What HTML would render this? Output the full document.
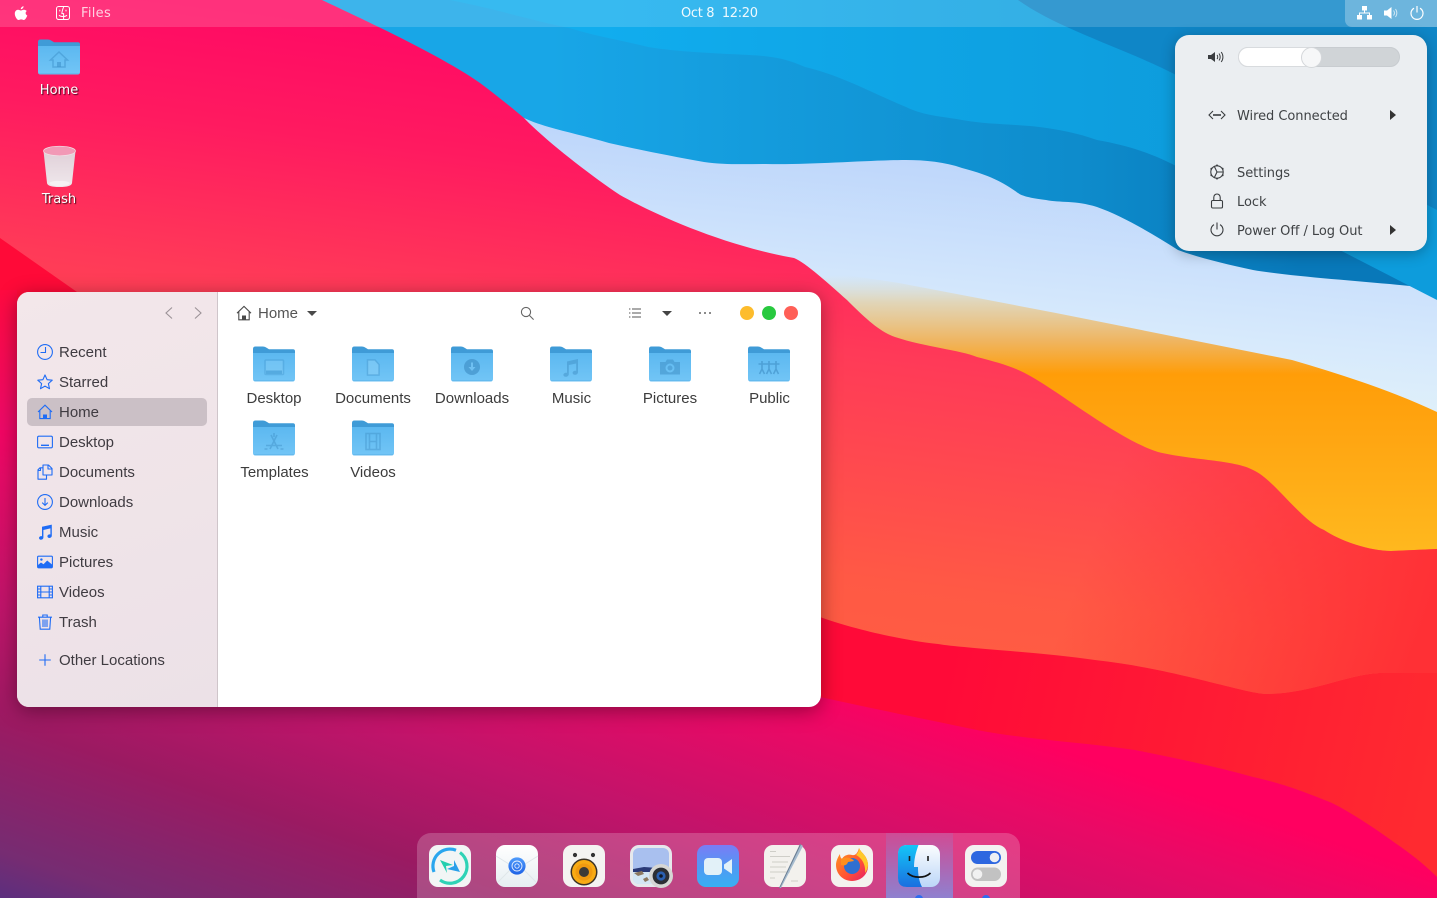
<!DOCTYPE html>
<html><head><meta charset="utf-8"><title>Files</title>
<style>
html,body{margin:0;padding:0;width:1437px;height:898px;overflow:hidden;background:#ff0a62}
*{box-sizing:border-box}
svg{display:block}
#root{position:relative;width:1437px;height:898px;overflow:hidden}
.a{position:absolute}
#bg{position:absolute;left:0;top:0}
.panel{position:absolute;left:0;top:0;width:1437px;height:27px;background:rgba(255,255,255,.16);font:13px "DejaVu Sans","Liberation Sans",sans-serif;color:#fff}
.t{position:absolute;white-space:pre;line-height:18px}
.dl{position:absolute;font:13px/18px "DejaVu Sans",sans-serif;color:#fff;text-shadow:1px 1px 1px rgba(0,0,0,.75);white-space:pre;transform:translateX(-50%)}
.win{position:absolute;left:17px;top:292px;width:804px;height:415px;border-radius:12px;background:#fff;box-shadow:0 4px 20px rgba(0,0,0,.38);overflow:hidden}
.side{position:absolute;left:0;top:0;width:201px;height:415px;background:linear-gradient(160deg,#f3e7ea,#ece1e7);border-right:1px solid #cfc5ca}
.sel{position:absolute;left:10px;top:106px;width:180px;height:28px;border-radius:5px;background:#cbc0c6}
.si{position:absolute;left:20px;width:16px;height:16px}
.st{position:absolute;left:42px;font:15px/20px "Liberation Sans",sans-serif;letter-spacing:0;color:#3f3b41;white-space:pre}
.fl{position:absolute;font:15px/20px "Liberation Sans",sans-serif;letter-spacing:0;color:#3c3c3c;white-space:pre;transform:translateX(-50%)}
.f{position:absolute;width:42px;height:36px}
.pop{position:absolute;left:1175px;top:35px;width:252px;height:216px;border-radius:14px;background:#ebeef1;box-shadow:0 3px 14px rgba(0,0,0,.28)}
.pt{position:absolute;left:62px;font:13px/18px "DejaVu Sans",sans-serif;letter-spacing:-.05px;color:#3f4245;white-space:pre}
.tri{position:absolute;width:0;height:0;border-top:5px solid transparent;border-bottom:5px solid transparent;border-left:6px solid #333}
.dock{position:absolute;left:417px;top:833px;width:603px;height:65px;border-radius:14px 14px 0 0;background:rgba(255,255,255,.2);overflow:hidden}
.d{position:absolute;top:845px;width:42px;height:42px;overflow:visible}
</style></head><body><div id="root">

<svg id="bg" width="1437" height="898" viewBox="0 0 1437 898">
<defs>
<linearGradient id="gBase" gradientUnits="userSpaceOnUse" x1="0" y1="898" x2="153" y2="443">
<stop offset="0" stop-color="#5c2f7e"/><stop offset=".09" stop-color="#762c72"/><stop offset=".35" stop-color="#9b1a62"/><stop offset=".58" stop-color="#c0146a"/><stop offset=".85" stop-color="#e80a66"/><stop offset="1" stop-color="#ff0060"/>
</linearGradient>
<linearGradient id="gRed" gradientUnits="userSpaceOnUse" x1="950" y1="650" x2="1437" y2="760">
<stop offset="0" stop-color="#ff0a38"/><stop offset="1" stop-color="#ff2a30"/>
</linearGradient>
<linearGradient id="gSky" gradientUnits="userSpaceOnUse" x1="1150" y1="170" x2="1130" y2="390">
<stop offset="0" stop-color="#bcd5fb"/><stop offset=".7" stop-color="#d6e9fc"/><stop offset="1" stop-color="#dff0fa"/>
</linearGradient>
<linearGradient id="gOr" gradientUnits="userSpaceOnUse" x1="0" y1="275" x2="0" y2="550">
<stop offset="0" stop-color="#dcdcc8" stop-opacity="0"/><stop offset=".1" stop-color="#e2d3b0" stop-opacity=".9"/><stop offset=".24" stop-color="#efb560"/><stop offset=".36" stop-color="#ff9d08"/><stop offset=".6" stop-color="#ffa612"/><stop offset="1" stop-color="#ffb81e"/>
</linearGradient>
<linearGradient id="gPink" gradientUnits="userSpaceOnUse" x1="400" y1="30" x2="330" y2="600">
<stop offset="0" stop-color="#ff0a64"/><stop offset=".2" stop-color="#ff1a60"/><stop offset=".46" stop-color="#ff3a58"/><stop offset=".85" stop-color="#ff5945"/><stop offset="1" stop-color="#ff5d42"/>
</linearGradient>
<linearGradient id="gPink2" gradientUnits="userSpaceOnUse" x1="1100" y1="520" x2="1420" y2="640">
<stop offset="0" stop-color="#ff3035" stop-opacity="0"/><stop offset="1" stop-color="#ff3035"/>
</linearGradient>
<linearGradient id="gB1" gradientUnits="userSpaceOnUse" x1="550" y1="0" x2="1300" y2="0">
<stop offset="0" stop-color="#18a6e7"/><stop offset=".7" stop-color="#0e8ccc"/><stop offset="1" stop-color="#0878b9"/>
</linearGradient>
<linearGradient id="gB2" gradientUnits="userSpaceOnUse" x1="600" y1="0" x2="1200" y2="0">
<stop offset="0" stop-color="#11adee"/><stop offset="1" stop-color="#0d9cdc"/>
</linearGradient>
<linearGradient id="gLeft" gradientUnits="userSpaceOnUse" x1="0" y1="290" x2="0" y2="430">
<stop offset="0" stop-color="#ff0a40"/><stop offset="1" stop-color="#ee0a69"/>
</linearGradient>
</defs>
<rect width="1437" height="898" fill="url(#gBase)"/>
<path fill="url(#gRed)" d="M0,200 L1437,500 L1437,877 C1420,860 1405,850 1391,840 C1370,825 1350,812 1332,803 C1300,790 1280,783 1253,777 C1210,765 1170,757 1135,750 C1080,742 1030,740 977,730 C920,718 870,708 820,697 L17,345 L0,335 Z"/>
<rect x="0" y="290" width="17" height="140" fill="url(#gLeft)"/>
<path fill="url(#gSky)" d="M400,50 H1437 V430 H820 Z"/>
<path fill="url(#gOr)" d="M820,269 L859,277 L899,283 L1056,313 L1292,360 C1340,374 1390,390 1437,412 L1437,580 L820,580 Z"/>
<path fill="url(#gB1)" d="M300,0 L1437,0 L1437,289 C1380,282 1300,278 1253,270 C1225,264 1200,258 1178,250 C1150,232 1120,215 1097,207 C1075,200 1060,203 1046,200 C1030,198 1022,196 1018,193 C1000,180 985,174 962,168 C945,162 925,160 906,160 C870,160 810,165 766,164 C745,164 725,165 704,162 C670,156 640,150 609,143 C575,133 545,128 524,118 Z"/>
<path fill="url(#gB2)" d="M450,0 L1437,0 L1437,300 L1180,168 C1150,152 1125,145 1097,140 C1075,132 1050,128 1030,126 C1005,124 985,124 962,120 C940,116 925,116 906,107 C870,92 840,75 805,67 C785,58 770,56 749,55 C710,53 680,52 648,47 C620,40 595,36 569,28 C530,20 500,10 450,0 Z"/>
<path fill="#0f86c7" d="M1018,0 C1060,30 1130,50 1180,77 L1437,210 L1437,0 Z"/>
<path fill="url(#gPink)" d="M0,0 L322,0 C360,18 440,55 480,83 C500,98 512,108 524,118 C545,140 590,175 620,195 C650,212 720,245 794,258 C805,262 830,285 847,300 C865,318 880,332 895,337 C925,347 960,350 977,357 C1000,363 1015,367 1032,377 C1065,396 1120,440 1158,452 C1190,460 1235,460 1253,470 C1275,480 1300,520 1324,530 C1340,541 1370,551 1391,551 L1437,549 L1437,673 L1379,673 C1345,675 1310,694 1265,694 C1240,692 1170,668 1095,660 C1040,652 960,648 938,644 C900,640 850,628 820,617 L77,292 L0,238 Z"/>
<path fill="url(#gPink2)" d="M1032,377 C1065,396 1120,440 1158,452 C1190,460 1235,460 1253,470 C1275,480 1300,520 1324,530 C1340,541 1370,551 1391,551 L1437,549 L1437,673 L1379,673 C1345,675 1310,694 1265,694 C1240,692 1170,668 1095,660 L1000,650 Z"/>
</svg>

<svg width="0" height="0" style="position:absolute">
<defs>
<linearGradient id="fFront" x1="0" y1="0" x2="0" y2="1"><stop offset="0" stop-color="#5cb8f0"/><stop offset="1" stop-color="#72c5f6"/></linearGradient>
<symbol id="folder" viewBox="0 0 42 36">
<path d="M0,3 Q0,0.5 2.5,0.5 H10 Q12,0.5 14,2 L16,3.2 H40 Q42,3.2 42,5.2 V12 H0 Z" fill="#3f9bd7"/>
<path d="M0,7 H42 V33 Q42,35.5 39.5,35.5 H2.5 Q0,35.5 0,33 Z" fill="url(#fFront)"/>
<rect x="1" y="34.2" width="40" height="1.1" rx=".5" fill="#4ba6e0" opacity=".45"/>
</symbol>
</defs>
</svg>

<div class="panel">
<svg class="a" style="left:14px;top:6px" width="14" height="15" viewBox="0 0 14 15"><path fill="#fff" d="M9.6 0.3C9.7 1.6 8.4 3.3 6.8 3.2 6.7 1.8 8.1 0.4 9.6 0.3ZM12.8 5C11.1 6 11.3 8.6 13.3 9.5 12.6 11.5 11.2 14 9.7 14 8.7 14 8.4 13.4 7.2 13.4 6 13.4 5.6 14 4.7 14 3 14 0.8 10.4 0.8 7.7 0.8 5.2 2.4 3.8 4 3.8 5.2 3.8 6 4.5 6.9 4.5 7.8 4.5 8.5 3.7 9.9 3.7 11 3.7 12 4.1 12.8 5Z"/></svg>
<svg class="a" style="left:56px;top:6px" width="14" height="14" viewBox="0 0 14 14" fill="none" stroke="#fff" stroke-width="1"><rect x=".5" y=".5" width="13" height="13" rx="2.2"/><path d="M7.6 1C6.6 3.5 5.9 5.5 5.9 7.6H7.6V13"/><path d="M3 9.2C5 11 9 11 11 9.2" /><path d="M3.8 3.8V5.4M10 3.8V5.4"/></svg>
<div class="t" style="left:81px;top:5px;letter-spacing:.3px;color:rgba(255,255,255,.78)">Files</div>
<div class="t" style="left:681px;top:5px;letter-spacing:-.33px;color:rgba(255,255,255,.92)">Oct 8  12:20</div>
<div class="a" style="left:1345px;top:0;width:92px;height:27px;border-radius:0 0 0 7px;background:rgba(255,255,255,.28)"></div>
<svg class="a" style="left:1357px;top:6px" width="15" height="14" viewBox="0 0 15 14" fill="#fff"><rect x="5" y="0" width="5" height="4.5"/><rect x="0" y="9" width="5" height="4.5"/><rect x="10" y="9" width="5" height="4.5"/><path d="M7 4.5H8V6.5H13V9H12V7.5H3V9H2V6.5H7Z"/></svg>
<svg class="a" style="left:1384px;top:6px" width="15" height="14" viewBox="0 0 15 14"><path fill="#fff" d="M0 4.5H3L7.5 1V13L3 9.5H0Z"/><path fill="none" stroke="#fff" stroke-opacity=".7" d="M9.5 4.5C10.7 6 10.7 8 9.5 9.5M11.5 3C13.2 5.5 13.2 8.5 11.5 11"/></svg>
<svg class="a" style="left:1410px;top:5px" width="14" height="15" viewBox="0 0 14 15" fill="none" stroke="#fff" stroke-width="1.2"><path d="M4 3.2A6 6 0 1 0 10 3.2"/><path d="M7 1V7.5"/></svg>
</div>

<svg class="f" style="left:38px;top:39px" viewBox="0 0 42 36"><use href="#folder" width="42" height="36"/><path d="M21 13L12.5 21H15V28H27V21H29.5Z" fill="none" stroke="#3f93cc" stroke-width="1.5" opacity=".55"/><rect x="19" y="23" width="4" height="5" fill="#3f93cc" opacity=".6"/></svg>
<div class="dl" style="left:59px;top:82px">Home</div>
<svg class="a" style="left:42px;top:145px" width="35" height="43" viewBox="0 0 35 43"><defs><linearGradient id="tb" x1="0" y1="0" x2="0" y2="1"><stop offset="0" stop-color="#e0d0d8"/><stop offset="1" stop-color="#efe8ec"/></linearGradient></defs><path d="M1.5 6L5 38Q5.5 42 17.5 42Q29.5 42 30 38L33.5 6Z" fill="url(#tb)"/><ellipse cx="17.5" cy="6" rx="16" ry="4.8" fill="#f299b6"/><ellipse cx="17.5" cy="6" rx="16" ry="4.8" fill="none" stroke="#f0e0e6" stroke-width=".7"/><path d="M7 38Q11 35.5 17.5 36Q24 35.5 28 38Q26 41 17.5 41Q9 41 7 38Z" fill="#f5f1f3"/></svg>
<div class="dl" style="left:59px;top:191px">Trash</div>

<div class="win">
<div class="side">
<svg class="a" style="left:147px;top:14px" width="10" height="14" viewBox="0 0 10 14" fill="none" stroke="#9b9297" stroke-width="1.1"><path d="M8 1.5L2 7L8 12.5"/></svg>
<svg class="a" style="left:176px;top:14px" width="10" height="14" viewBox="0 0 10 14" fill="none" stroke="#9b9297" stroke-width="1.1"><path d="M2 1.5L8 7L2 12.5"/></svg>
<div class="sel"></div>

<svg class="si" style="top:52px" viewBox="0 0 16 16" fill="none" stroke="#1f6cf5" stroke-width="1.1"><circle cx="8" cy="8" r="7.4"/><path d="M8.5 3V8.5H3.5"/></svg>
<div class="st" style="top:51px">Recent</div>
<svg class="si" style="top:82px" viewBox="0 0 16 16" fill="none" stroke="#1f6cf5" stroke-width="1.1" stroke-linejoin="round"><path d="M8 1L10.1 5.7L15.2 6.2L11.4 9.6L12.5 14.7L8 12.1L3.5 14.7L4.6 9.6L0.8 6.2L5.9 5.7Z"/></svg>
<div class="st" style="top:81px">Starred</div>
<svg class="si" style="top:112px" viewBox="0 0 16 16" fill="none" stroke="#1f6cf5" stroke-width="1.1"><path d="M1 8L8 1.2L15 8M2.8 6.6V14.6H13.2V6.6"/><path d="M6 15V10.5H10V15Z" fill="#1f6cf5" stroke="none"/></svg>
<div class="st" style="top:111px">Home</div>
<svg class="si" style="top:142px" viewBox="0 0 16 16" fill="none" stroke="#1f6cf5" stroke-width="1.1"><rect x=".6" y="2.2" width="14.8" height="11.6" rx="1.3"/><rect x="4" y="10.6" width="8" height="1.4" fill="#1f6cf5" stroke="none"/></svg>
<div class="st" style="top:141px">Desktop</div>
<svg class="si" style="top:172px" viewBox="0 0 16 16" fill="none" stroke="#1f6cf5" stroke-width="1.1" stroke-linejoin="round"><path d="M6.5 3.8H3L1 5.8V15.2H9.5V11"/><path d="M6 1H11.5L15 4.5V11H6Z"/><path d="M11 1V5H15"/><path d="M1 6.5H3.5V4"/></svg>
<div class="st" style="top:171px">Documents</div>
<svg class="si" style="top:202px" viewBox="0 0 16 16" fill="none" stroke="#1f6cf5" stroke-width="1.1"><circle cx="8" cy="8" r="7.4"/><path d="M8 4V11.2M5.2 8.6L8 11.4L10.8 8.6"/></svg>
<div class="st" style="top:201px">Downloads</div>
<svg class="si" style="top:232px" viewBox="0 0 16 16" fill="#1f6cf5"><path d="M5 2.8L14.8.6V11.8C14.8 13.2 13.6 14 12.5 14 11.3 14 10.4 13.3 10.4 12.3 10.4 11.2 11.6 10.4 12.7 10.4 13 10.4 13.2 10.4 13.4 10.5V4.4L6.4 6V13.5C6.4 14.9 5.2 15.7 4 15.7 2.9 15.7 2 15 2 14 2 12.9 3.2 12.1 4.3 12.1 4.5 12.1 4.8 12.1 5 12.2Z"/></svg>
<div class="st" style="top:231px">Music</div>
<svg class="si" style="top:262px" viewBox="0 0 16 16"><rect x=".6" y="2.2" width="14.8" height="11.6" rx="1" fill="none" stroke="#1f6cf5" stroke-width="1.1"/><circle cx="4.4" cy="5.6" r="1.2" fill="#1f6cf5"/><path d="M1 13.5V11L4 8.5L6.5 10.2L10.2 6.5L15 10.5V13.5Z" fill="#1f6cf5"/></svg>
<div class="st" style="top:261px">Pictures</div>
<svg class="si" style="top:292px" viewBox="0 0 16 16" fill="none" stroke="#1f6cf5" stroke-width="1.1"><rect x=".6" y="2.2" width="14.8" height="11.6"/><path d="M3.8 2.2V13.8M12.2 2.2V13.8M3.8 8H12.2M.6 5H3.8M.6 8H3.8M.6 11H3.8M12.2 5H15.4M12.2 8H15.4M12.2 11H15.4"/></svg>
<div class="st" style="top:291px">Videos</div>
<svg class="si" style="top:322px" viewBox="0 0 16 16" fill="none" stroke="#1f6cf5" stroke-width="1.1"><path d="M1 3.2H15M5.8 3V1H10.2V3M2.4 3.4L3.2 15.2H12.8L13.6 3.4"/><path d="M6 5.5V13M8 5.5V13M10 5.5V13"/></svg>
<div class="st" style="top:321px">Trash</div>
<svg class="si" style="top:360px" viewBox="0 0 16 16" fill="none" stroke="#1f6cf5" stroke-width="1.1"><path d="M8 2.2V13.8M2.2 8H13.8"/></svg>
<div class="st" style="top:359px">Other Locations</div>
</div>

<svg class="a" style="left:219px;top:13px" width="16" height="16" viewBox="0 0 16 16" fill="none" stroke="#4a4a4a" stroke-width="1.1"><path d="M1 8.2L8 1.4L15 8.2M2.8 6.8V14.8H13.2V6.8"/><path d="M6 15V10.5H10V15Z" fill="#4a4a4a" stroke="none"/></svg>
<div class="a" style="left:241px;top:12px;font:15px/20px 'Liberation Sans',sans-serif;color:#555">Home</div>
<div class="a" style="left:290px;top:19px;width:0;height:0;border-left:5px solid transparent;border-right:5px solid transparent;border-top:5px solid #4a4a4a"></div>
<svg class="a" style="left:503px;top:14px" width="15" height="15" viewBox="0 0 15 15" fill="none" stroke="#666" stroke-width="1.1"><circle cx="6" cy="6" r="4.6"/><path d="M9.4 9.4L13.6 13.6"/></svg>
<svg class="a" style="left:612px;top:16px" width="12" height="10" viewBox="0 0 12 10" fill="none" stroke="#555" stroke-width="1"><path d="M3 1H12M3 5H12M3 9H12M0 1H1.4M0 5H1.4M0 9H1.4"/></svg>
<div class="a" style="left:645px;top:19px;width:0;height:0;border-left:5px solid transparent;border-right:5px solid transparent;border-top:5px solid #444"></div>
<svg class="a" style="left:681px;top:19px" width="14" height="4" viewBox="0 0 14 4" fill="#666"><circle cx="2" cy="2" r="1"/><circle cx="7" cy="2" r="1"/><circle cx="12" cy="2" r="1"/></svg>
<div class="a" style="left:723px;top:14px;width:14px;height:14px;border-radius:50%;background:#fdbc2c"></div>
<div class="a" style="left:745px;top:14px;width:14px;height:14px;border-radius:50%;background:#28c93f"></div>
<div class="a" style="left:767px;top:14px;width:14px;height:14px;border-radius:50%;background:#ff5f57"></div>
</div>

<!-- file grid -->
<svg class="f" style="left:253px;top:346px" viewBox="0 0 42 36"><use href="#folder" width="42" height="36"/><g opacity=".35"><rect x="12" y="14" width="18.5" height="14.5" rx="1" fill="#8ed2f8" stroke="#3f93cc" stroke-width="1.6"/><rect x="13" y="24.5" width="16" height="3.5" fill="#2f83bc"/></g></svg>
<div class="fl" style="left:274px;top:389px">Desktop</div>
<svg class="f" style="left:352px;top:346px" viewBox="0 0 42 36"><use href="#folder" width="42" height="36"/><path d="M15.5 14H23L27 18.5V29H15.5Z" fill="#8ed2f8" fill-opacity=".5" stroke="#3f93cc" stroke-width="1.5" stroke-opacity=".45"/></svg>
<div class="fl" style="left:373px;top:389px">Documents</div>
<svg class="f" style="left:451px;top:346px" viewBox="0 0 42 36"><use href="#folder" width="42" height="36"/><circle cx="21" cy="21" r="8" fill="#3f8fc6" opacity=".65"/><path d="M20 16.5H22V21H24.5L21 25L17.5 21H20Z" fill="#6fc0f2"/></svg>
<div class="fl" style="left:472px;top:389px">Downloads</div>
<svg class="f" style="left:550px;top:346px" viewBox="0 0 42 36"><use href="#folder" width="42" height="36"/><path d="M17 15.5L28 13V26C28 27.8 26.5 28.8 25 28.8 23.6 28.8 22.6 28 22.6 26.9 22.6 25.6 24 24.7 25.3 24.7 25.7 24.7 26 24.8 26.2 24.9V17.5L18.8 19V28C18.8 29.8 17.3 30.8 15.8 30.8 14.4 30.8 13.4 30 13.4 28.9 13.4 27.6 14.8 26.7 16.1 26.7 16.5 26.7 16.8 26.8 17 26.9Z" fill="#3f8fc6" opacity=".5"/></svg>
<div class="fl" style="left:571.5px;top:389px">Music</div>
<svg class="f" style="left:649px;top:346px" viewBox="0 0 42 36"><use href="#folder" width="42" height="36"/><path d="M11 16H16.5L18 13.5H24L25.5 16H31V28.5H11Z M21 17.5A4.5 4.5 0 1 0 21 26.5A4.5 4.5 0 1 0 21 17.5Z M21 19.5A2.5 2.5 0 1 1 21 24.5A2.5 2.5 0 1 1 21 19.5Z" fill="#3f8fc6" opacity=".55" fill-rule="evenodd"/></svg>
<div class="fl" style="left:670px;top:389px">Pictures</div>
<svg class="f" style="left:748px;top:346px" viewBox="0 0 42 36"><use href="#folder" width="42" height="36"/><g fill="none" stroke="#3f8fc6" stroke-width="1.6" opacity=".6"><path d="M14 15V23M14 23L11.5 28M14 23L16.5 28M10.5 18L17.5 18"/><path d="M21 15V23M21 23L18.5 28M21 23L23.5 28M17.5 18L24.5 18"/><path d="M28 15V23M28 23L25.5 28M28 23L30.5 28M24.5 18L31.5 18"/></g></svg>
<div class="fl" style="left:769.5px;top:389px">Public</div>
<svg class="f" style="left:253px;top:420px" viewBox="0 0 42 36"><use href="#folder" width="42" height="36"/><path d="M21 13V17M17 29L24 15M25 29L18 15M13 25.5H29M11.5 29H14.5M27.5 29H30.5" fill="none" stroke="#3f8fc6" stroke-width="1.6" opacity=".45"/></svg>
<div class="fl" style="left:274.5px;top:463px">Templates</div>
<svg class="f" style="left:352px;top:420px" viewBox="0 0 42 36"><use href="#folder" width="42" height="36"/><g fill="none" stroke="#3f8fc6" stroke-width="1.6" opacity=".42"><rect x="14" y="13.5" width="14" height="16"/><path d="M17.5 13.5V29.5M24.5 13.5V29.5M17.5 21.5H24.5"/></g></svg>
<div class="fl" style="left:373px;top:463px">Videos</div>

<!-- system menu -->
<div class="pop">
<svg class="a" style="left:33px;top:15px" width="18" height="14" viewBox="0 0 18 14"><path fill="#3a3d40" d="M0 5H3L7 2V12L3 9H0Z"/><path fill="none" stroke="#3a3d40" d="M9 5C10 6 10 8 9 9M11 3.5C12.6 5.5 12.6 8.5 11 10.5M13.2 2C15.5 5 15.5 9 13.2 12"/></svg>
<div class="a" style="left:63px;top:12px;width:162px;height:20px;border-radius:10px;background:#d0d4d7;border:1px solid #c8ccd0"></div>
<div class="a" style="left:63px;top:12px;width:74px;height:20px;border-radius:10px 0 0 10px;background:#fff;border:1px solid #d8dbde;border-right:none"></div>
<div class="a" style="left:126px;top:12px;width:21px;height:21px;border-radius:50%;background:#f6f7f8;border:1px solid #d4d7da"></div>

<svg class="a" style="left:33px;top:74px" width="18" height="12" viewBox="0 0 18 12" fill="none" stroke="#3a3d40" stroke-width="1.1"><path d="M5 2L1 6L5 10M13 2L17 6L13 10"/><path d="M5 6H13" stroke-width="1.6"/></svg>
<div class="pt" style="top:73px">Wired Connected</div>
<div class="tri" style="left:215px;top:75px"></div>

<svg class="a" style="left:34px;top:129px" width="16" height="16" viewBox="0 0 16 16" fill="none" stroke="#3a3d40" stroke-width="1.1"><circle cx="8" cy="8" r="6.2"/><path d="M8 .6V2M8 14V15.4M1.6 4.3L2.8 5M13.2 11L14.4 11.7M1.6 11.7L2.8 11M13.2 5L14.4 4.3" stroke-width="1.8"/><path d="M5.5 2.8L8 8L14 8M8 8L5.5 13.2"/></svg>
<div class="pt" style="top:130px">Settings</div>
<svg class="a" style="left:35px;top:158px" width="14" height="16" viewBox="0 0 14 16" fill="none" stroke="#3a3d40" stroke-width="1.1"><rect x="1.5" y="7.5" width="11" height="7.5" rx="1.2"/><path d="M3.8 7.5V4.2A3.2 3.2 0 0 1 10.2 4.2V7.5"/></svg>
<div class="pt" style="top:159px">Lock</div>
<svg class="a" style="left:35px;top:187px" width="14" height="15" viewBox="0 0 14 15" fill="none" stroke="#3a3d40" stroke-width="1.1"><path d="M4 2.6A6 6 0 1 0 10 2.6"/><path d="M7 .5V7.5"/></svg>
<div class="pt" style="top:188px">Power Off / Log Out</div>
<div class="tri" style="left:215px;top:190px"></div>
</div>

<!-- dock -->
<div class="dock">
<div class="a" style="left:469px;top:0;width:67px;height:65px;background:linear-gradient(180deg,rgba(100,170,255,.12),rgba(100,170,255,.6))"></div>
</div>
<div class="a" style="left:915px;top:895px;width:8px;height:8px;border-radius:50%;background:#2e6cf0"></div>
<div class="a" style="left:982px;top:895px;width:8px;height:8px;border-radius:50%;background:#2e6cf0"></div>

<svg class="d" style="left:429px" viewBox="0 0 42 42"><rect width="42" height="42" rx="9" fill="#f2f5f5"/><path d="M27 5.2A17 17 0 0 0 5 27" fill="none" stroke="#2aa6ee" stroke-width="3.2"/><path d="M31 7.5A17 17 0 0 1 11 35" fill="none" stroke="#2fd3b6" stroke-width="3.2"/><path d="M11 15L24 20L17 21L18 28Z" fill="#22cfb0"/><path d="M31 27L18 24L25 21L25 15Z" fill="#2aa0ea"/></svg>
<svg class="d" style="left:496px" viewBox="0 0 42 42"><defs><linearGradient id="mb" x1="0" y1="0" x2="0" y2="1"><stop offset="0" stop-color="#fff"/><stop offset="1" stop-color="#e6eef2"/></linearGradient><linearGradient id="mc" x1="0" y1="0" x2="0" y2="1"><stop offset="0" stop-color="#4f9bfb"/><stop offset="1" stop-color="#1d62e6"/></linearGradient></defs><rect width="42" height="42" rx="9" fill="url(#mb)"/><path d="M0 11L21 24L42 11M2 37L15 24M40 37L27 24" fill="none" stroke="#dfe6ea" stroke-width="1"/><circle cx="21" cy="21" r="8.6" fill="url(#mc)"/><circle cx="21" cy="21" r="5" fill="none" stroke="#fff" stroke-width=".9" opacity=".85"/><circle cx="21" cy="21" r="2.2" fill="none" stroke="#fff" stroke-width=".9" opacity=".85"/></svg>
<svg class="d" style="left:563px" viewBox="0 0 42 42"><rect width="42" height="42" rx="9" fill="#f4f3f1"/><circle cx="12" cy="10" r="2.1" fill="#333"/><circle cx="30" cy="10" r="2.1" fill="#333"/><circle cx="21" cy="27" r="13.5" fill="#3a3226"/><circle cx="21" cy="27" r="12" fill="#f8ab14"/><circle cx="21" cy="27" r="8.5" fill="#f09a10"/><circle cx="21" cy="27" r="5" fill="#3c3a37"/></svg>
<svg class="d" style="left:630px" viewBox="0 0 42 42"><rect width="42" height="42" rx="9" fill="#e6e8ec"/><rect x="3" y="3" width="36" height="36" rx="6" fill="#a9c0ef"/><path d="M3 26H39V33Q39 39 33 39H9Q3 39 3 33Z" fill="#d4e6f4"/><path d="M3 24L14 22L28 23L39 22V27H3Z" fill="#2b3a77"/><path d="M4 28L12 26L14 29L8 31Z" fill="#8c7860"/><path d="M13 34L17 32L19 35L15 37Z" fill="#8c7860"/><circle cx="31" cy="31" r="12" fill="#d6d6d4"/><circle cx="31" cy="31" r="8.4" fill="#2c2e34"/><circle cx="31" cy="31" r="4.6" fill="#2a5fb0"/><circle cx="31" cy="31" r="1.8" fill="#0e1626"/></svg>
<svg class="d" style="left:697px" viewBox="0 0 42 42"><defs><linearGradient id="zg" x1="0" y1="0" x2="0" y2="1"><stop offset="0" stop-color="#7a7cf6"/><stop offset=".55" stop-color="#4f9af3"/><stop offset="1" stop-color="#38b0f3"/></linearGradient></defs><rect width="42" height="42" rx="9" fill="url(#zg)"/><rect x="7" y="13" width="18" height="17" rx="4" fill="#e2f1f8"/><path d="M27 19.5L35 14V29L27 23.5Z" fill="#e2f1f8"/></svg>
<svg class="d" style="left:764px" viewBox="0 0 42 42"><rect width="42" height="42" rx="9" fill="#f3f1ed"/><path d="M6 6.5H12M6 11.5H26M8 17H24M6 22H22M6 27H26M6 33H11M27 36H34" fill="none" stroke="#c4c2bc" stroke-width=".8"/><path d="M36 -1L39 1L17 43L15 43Z" fill="#a6bccf"/><path d="M36 -1L37 -.4L16 43L15 43Z" fill="#6d8094"/></svg>
<svg class="d" style="left:831px" viewBox="0 0 42 42"><defs><linearGradient id="ffo" x1="0" y1="0" x2="1" y2="1"><stop offset="0" stop-color="#ff9c1c"/><stop offset=".6" stop-color="#ff4f36"/><stop offset="1" stop-color="#e41a6c"/></linearGradient></defs><rect width="42" height="42" rx="9" fill="#f4f2ef"/><path d="M28 3C30 8 36 10 37 19C38 29 30 36 21 36C12 36 5 29 5 20C5 16 7 12 9 9C9 12 10 13 11 14C13 10 18 9 21 10C25 11 27 7 28 3Z" fill="url(#ffo)"/><path d="M28 3C30 8 36 10 37 19C37 23 36 25 34 28C35 20 31 13 25 10C27 8 28 6 28 3Z" fill="#ffc82a"/><circle cx="21" cy="21" r="8" fill="#2f6fd0"/><path d="M10 14C14 12 20 12 23 16L17 17C16 20 14 21 10 20Z" fill="#ff8e1e"/></svg>
<svg class="d" style="left:898px" viewBox="0 0 42 42"><defs><linearGradient id="fa" x1="0" y1="0" x2="0" y2="1"><stop offset="0" stop-color="#14c6f7"/><stop offset="1" stop-color="#1a6fe0"/></linearGradient><linearGradient id="fb" x1="0" y1="0" x2="0" y2="1"><stop offset="0" stop-color="#fbfdfe"/><stop offset="1" stop-color="#bcd6f8"/></linearGradient></defs><rect width="42" height="42" rx="9" fill="url(#fb)"/><path d="M9 0H20.5C17.5 8 16 15 16 22H20C20 30 21 36 24 42H9Q0 42 0 33V9Q0 0 9 0Z" fill="url(#fa)"/><path d="M11.5 11V16M30 11V16" stroke="#1b1b1b" stroke-width="1.6" fill="none"/><path d="M9.5 28C15 33.5 27 33.5 32.5 28" stroke="#111" stroke-width="1.7" fill="none"/></svg>
<svg class="d" style="left:965px" viewBox="0 0 42 42"><rect width="42" height="42" rx="9" fill="#f3f2f1"/><rect x="6" y="6" width="30" height="13" rx="6.5" fill="#2d67e0"/><circle cx="29.5" cy="12.5" r="4.8" fill="#eceff4"/><rect x="6" y="22.5" width="30" height="13.5" rx="6.7" fill="#c2c2c2"/><circle cx="12.5" cy="29.2" r="4.8" fill="#f1f1f1"/></svg>

</div></body></html>
